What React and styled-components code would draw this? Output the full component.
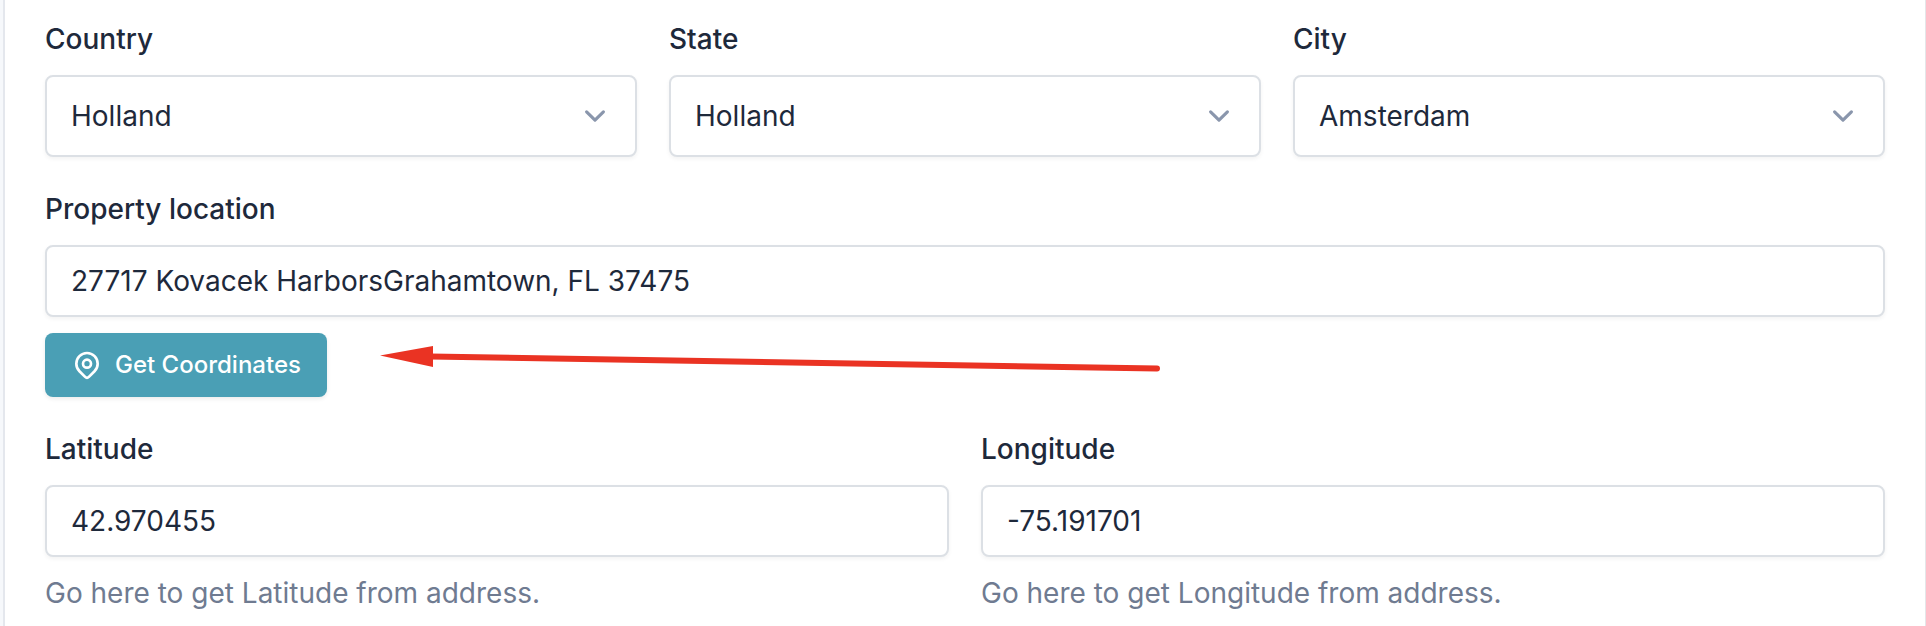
import React from "react";
import styled, { createGlobalStyle } from "styled-components";

const GlobalStyle = createGlobalStyle`
  *, *::before, *::after { box-sizing: border-box; }
  body {
    margin: 0;
    background: #f6f8fb;
    font-family: Inter, "Liberation Sans", sans-serif;
    color: #1e293b;
    overflow: hidden;
  }
`;

const Card = styled.main`
  position: relative;
  display: flex;
  flex-direction: column;
  gap: 32px;
  height: 626px;
  margin-left: 3px;
  padding: 19px 40px 0;
  background: #fff;
  border-left: 2px solid #e4e7ed;
  border-right: 1px solid #e4e6e9;
`;

const Row = styled.div`
  display: grid;
  grid-template-columns: repeat(${(p) => p.$columns}, 1fr);
  gap: 32px;
`;

const Field = styled.div`
  display: flex;
  flex-direction: column;
  align-items: flex-start;
  gap: 16px;
`;

const Label = styled.label`
  font-size: 28px;
  font-weight: 500;
  line-height: 40px;
  color: #1e293b;
`;

const Control = styled.div`
  display: flex;
  align-items: center;
  justify-content: space-between;
  width: 100%;
  height: ${(p) => (p.$tall ? 82 : 72)}px;
  padding: 0 24px;
  border: 2px solid #dce0e5;
  border-radius: 8px;
  background: #fff;
  box-shadow: 0 2px 4px rgba(0, 0, 0, 0.05);
  font-size: 28px;
  line-height: 40px;
  white-space: nowrap;
  color: #1e293b;
`;

const Chevron = styled.svg`
  width: 42px;
  height: 42px;
  margin-right: -5px;
  color: #8a96ac;
`;

const Hint = styled.p`
  margin: 0;
  font-size: 28px;
  line-height: 40px;
  color: #6f7b91;
`;

const Button = styled.button`
  display: inline-flex;
  align-items: center;
  gap: 12px;
  height: 64px;
  padding: 0 26px;
  border: 0;
  border-radius: 8px;
  background: #4a9fb5;
  box-shadow: 0 2px 4px rgba(0, 0, 0, 0.08);
  color: #fff;
  font-family: inherit;
  font-size: 24px;
  font-weight: 500;
  line-height: 32px;
  white-space: nowrap;
`;

const PinSvg = styled.svg`
  width: 32px;
  height: 32px;
`;

const Arrow = styled.svg`
  position: absolute;
  left: 370px;
  top: 336px;
  width: 800px;
  height: 48px;
  pointer-events: none;
`;

function Select({ label, value }) {
  return (
    <Field>
      <Label>{label}</Label>
      <Control $tall>
        <span>{value}</span>
        <Chevron viewBox="0 0 20 20" fill="none" aria-hidden="true">
          <path
            d="M6 8l4 4 4-4"
            stroke="currentColor"
            strokeWidth="1.5"
            strokeLinecap="round"
            strokeLinejoin="round"
          />
        </Chevron>
      </Control>
    </Field>
  );
}

function TextField({ label, value, hint, children }) {
  return (
    <Field>
      <Label>{label}</Label>
      <Control>
        <span>{value}</span>
      </Control>
      {hint && <Hint>{hint}</Hint>}
      {children}
    </Field>
  );
}

function PinIcon() {
  return (
    <PinSvg
      viewBox="0 0 24 24"
      fill="none"
      stroke="currentColor"
      strokeWidth="2"
      strokeLinecap="round"
      strokeLinejoin="round"
      aria-hidden="true"
    >
      <path d="M17.657 16.657 13.414 20.9a2 2 0 0 1-2.827 0l-4.244-4.243a8 8 0 1 1 11.314 0z" />
      <path d="M15 11a3 3 0 1 1-6 0 3 3 0 0 1 6 0z" />
    </PinSvg>
  );
}

export default function App() {
  return (
    <>
      <GlobalStyle />
      <Card>
        <Row $columns={3}>
          <Select label="Country" value="Holland" />
          <Select label="State" value="Holland" />
          <Select label="City" value="Amsterdam" />
        </Row>
        <TextField
          label="Property location"
          value="27717 Kovacek HarborsGrahamtown, FL 37475"
        >
          <Button type="button">
            <PinIcon />
            Get Coordinates
          </Button>
        </TextField>
        <Row $columns={2}>
          <TextField
            label="Latitude"
            value="42.970455"
            hint="Go here to get Latitude from address."
          />
          <TextField
            label="Longitude"
            value="-75.191701"
            hint="Go here to get Longitude from address."
          />
        </Row>
        <Arrow viewBox="375 336 800 48" aria-hidden="true">
          <path d="M430 356.5 1157 368.5" stroke="#ea3323" strokeWidth="6" strokeLinecap="round" />
          <path d="M380 355.5 433 346V367z" fill="#ea3323" />
        </Arrow>
      </Card>
    </>
  );
}
